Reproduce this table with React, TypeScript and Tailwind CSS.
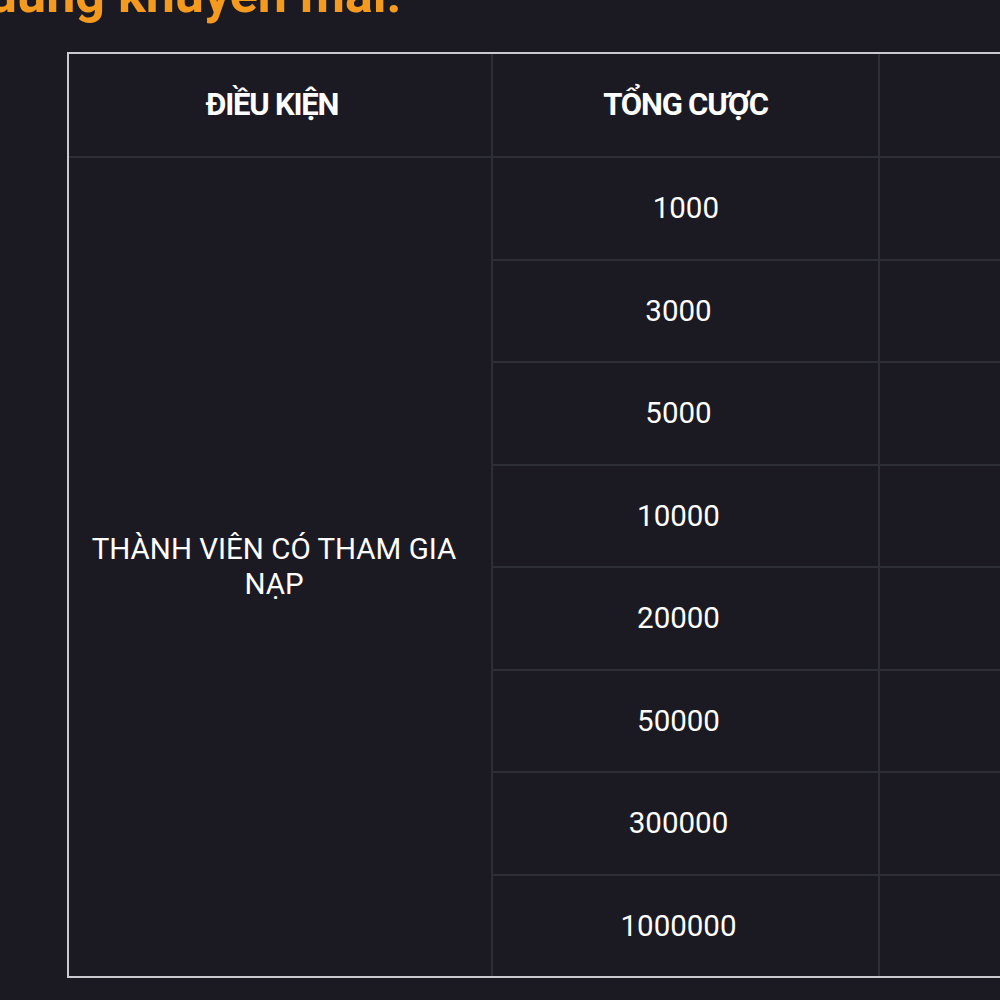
const rows = ["\u00a0\u00a01000", "3000", "5000", "10000", "20000", "50000", "300000", "1000000"]

export default function App() {
    return (
        <div className="w-[1000px] h-[1000px] overflow-hidden bg-[#1b1a23] font-['Roboto',sans-serif] text-white">
            {/* Heading, only the lower part shows */}
            <h2 className="-mt-[35px] -ml-[105px] whitespace-nowrap text-[52px] leading-[60px] font-bold text-[#f49a1f]">
                Nội dung khuyến mãi:
            </h2>

            <div className="mt-[27px] ml-[67px]">
                <table className="w-[1300px] border-collapse table-fixed outline-2 outline-[#c9c9cf] -outline-offset-2">
                    <colgroup>
                        <col className="w-[424px]" />
                        <col className="w-[387px]" />
                        <col />
                    </colgroup>
                    <thead>
                        <tr className="h-[104px]">
                            <th className="border-2 border-[#2e2e37] pr-4 text-[31px] font-bold tracking-[-1.2px]">ĐIỀU KIỆN</th>
                            <th className="border-2 border-[#2e2e37] text-[31px] font-bold tracking-[-1.2px]">TỔNG CƯỢC</th>
                            <th className="border-2 border-[#2e2e37]"></th>
                        </tr>
                    </thead>
                    <tbody>
                        {rows.map((r, i) => (
                            <tr key={i} className="h-[102.5px]">
                                {i === 0 && (
                                    <td rowSpan={rows.length} className="border-2 border-[#2e2e37] pl-5 pr-8 text-center text-[29.5px] leading-[35px]">
                                        THÀNH VIÊN CÓ THAM GIA NẠP
                                    </td>
                                )}
                                <td className="border-2 border-[#2e2e37] pr-[14px] text-center text-[29.5px]">{r}</td>
                                <td className="border-2 border-[#2e2e37]"></td>
                            </tr>
                        ))}
                    </tbody>
                </table>
            </div>
        </div>
    )
}
